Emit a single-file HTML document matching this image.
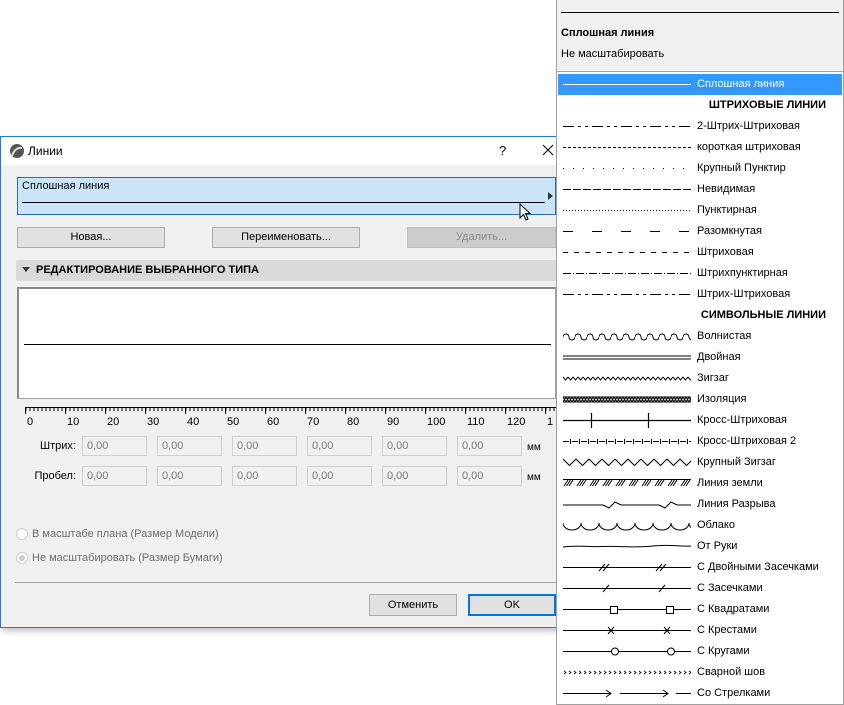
<!DOCTYPE html>
<html><head><meta charset="utf-8"><style>
*{margin:0;padding:0;box-sizing:border-box}
body{width:844px;height:705px;background:#fff;position:relative;overflow:hidden;font-family:"Liberation Sans","DejaVu Sans",sans-serif;font-size:11px;color:#000}
.a{position:absolute}
.btn{position:absolute;background:#e1e1e1;border:1px solid #adadad;text-align:center;line-height:18px;font-size:11px}
.inp{position:absolute;width:65px;height:20px;border:1px solid #cfcfcf;background:#f0f0f0;color:#7a7a7a;padding-left:4px;line-height:18px}
.row{position:absolute;left:558px;width:284px;height:21px}
.row svg{position:absolute;left:5px;top:0}
.row span{position:absolute;left:139px;top:4px;white-space:nowrap}
.hdr{position:absolute;right:16px;top:4px;font-weight:bold;white-space:nowrap}
</style></head><body>
<div class="a" style="left:0;top:136px;width:560px;height:492px;background:#f0f0f0;border:1px solid #1f7bd6;box-shadow:2px 3px 6px rgba(0,0,0,.25)"></div>
<div class="a" style="left:1px;top:137px;width:558px;height:28px;background:#fff"></div>
<svg class="a" style="left:9px;top:143px" width="16" height="16" viewBox="0 0 16 16"><circle cx="8" cy="8" r="7" fill="#555"/><path d="M3 13 Q6 4 13 5" stroke="#ddd" stroke-width="2" fill="none"/></svg>
<div class="a" style="left:28px;top:144px;font-size:12px">Линии</div>
<div class="a" style="left:499px;top:143px;font-size:13px">?</div>
<svg class="a" style="left:542px;top:144px" width="12" height="12"><path d="M1 1L11 11M11 1L1 11" stroke="#000" stroke-width="1"/></svg>
<div class="a" style="left:17px;top:177px;width:539px;height:38px;background:#cce4f7;border:1px solid #2a6db4"></div>
<div class="a" style="left:22px;top:180px">Сплошная линия</div>
<div class="a" style="left:22px;top:202px;width:523px;height:1px;background:#000"></div>
<svg class="a" style="left:548px;top:192px" width="5" height="8"><path d="M0 0L5 4L0 8Z" fill="#333"/></svg>
<svg class="a" style="left:519px;top:203px" width="14" height="20"><path d="M1 1L1 15L4.5 11.5L7 17L9 16L6.5 10.5L11 10.5Z" fill="#fff" stroke="#000" stroke-width="1"/></svg>
<div class="btn" style="left:17px;top:227px;width:148px;height:21px">Новая...</div>
<div class="btn" style="left:212px;top:227px;width:148px;height:21px">Переименовать...</div>
<div class="btn" style="left:407px;top:227px;width:149px;height:21px;background:#cccccc;border-color:#bfbfbf;color:#8a8a8a">Удалить...</div>
<div class="a" style="left:16px;top:260px;width:540px;height:21px;background:#d9d9d9;border-radius:2px"></div>
<svg class="a" style="left:22px;top:267px" width="8" height="6"><path d="M0 0L8 0L4 5Z" fill="#333"/></svg>
<div class="a" style="left:36px;top:264px;font-weight:bold">РЕДАКТИРОВАНИЕ ВЫБРАННОГО ТИПА</div>
<div class="a" style="left:17px;top:287px;width:539px;height:112px;background:#fff;border:1px solid #a0a0a0;border-top:2px solid #8a8a8a;border-left:2px solid #8a8a8a"></div>
<div class="a" style="left:24px;top:344px;width:527px;height:1px;background:#000"></div>
<svg class="a" style="left:0;top:400px" width="556" height="30">
<path d="M25 7.5H556" stroke="#000"/>
<path d="M25.5 7V14M65.5 7V14M105.5 7V14M145.5 7V14M185.5 7V14M225.5 7V14M265.5 7V14M305.5 7V14M345.5 7V14M385.5 7V14M425.5 7V14M465.5 7V14M505.5 7V14M545.5 7V14" stroke="#000"/>
<line x1="25.5" y1="9.5" x2="556" y2="9.5" stroke="#000" stroke-width="3" stroke-dasharray="1 3"/>
<g font-size="11" font-family="Liberation Sans">
<text x="27" y="25">0</text><text x="67" y="25">10</text><text x="107" y="25">20</text><text x="147" y="25">30</text><text x="187" y="25">40</text><text x="227" y="25">50</text><text x="267" y="25">60</text><text x="307" y="25">70</text><text x="347" y="25">80</text><text x="387" y="25">90</text><text x="427" y="25">100</text><text x="467" y="25">110</text><text x="507" y="25">120</text><text x="547" y="25">1</text></g>
</svg>
<div class="a" style="left:20px;top:440px;width:56px;text-align:right">Штрих:</div>
<div class="a" style="left:20px;top:470px;width:56px;text-align:right">Пробел:</div>
<div class="inp" style="left:82px;top:436px">0,00</div><div class="inp" style="left:157px;top:436px">0,00</div><div class="inp" style="left:232px;top:436px">0,00</div><div class="inp" style="left:307px;top:436px">0,00</div><div class="inp" style="left:382px;top:436px">0,00</div><div class="inp" style="left:457px;top:436px">0,00</div>
<div class="inp" style="left:82px;top:466px">0,00</div><div class="inp" style="left:157px;top:466px">0,00</div><div class="inp" style="left:232px;top:466px">0,00</div><div class="inp" style="left:307px;top:466px">0,00</div><div class="inp" style="left:382px;top:466px">0,00</div><div class="inp" style="left:457px;top:466px">0,00</div>
<div class="a" style="left:527px;top:442px;font-size:10px">мм</div>
<div class="a" style="left:527px;top:472px;font-size:10px">мм</div>
<div class="a" style="left:16px;top:528px;width:12px;height:12px;border-radius:50%;background:#fff;border:1px solid #ccc"></div>
<div class="a" style="left:32px;top:528px;color:#6d6d6d">В масштабе плана (Размер Модели)</div>
<div class="a" style="left:16px;top:552px;width:12px;height:12px;border-radius:50%;background:#fff;border:1px solid #ccc"><div style="margin:2px;width:6px;height:6px;border-radius:50%;background:#ccc"></div></div>
<div class="a" style="left:32px;top:552px;color:#6d6d6d">Не масштабировать (Размер Бумаги)</div>
<div class="a" style="left:15px;top:582px;width:541px;height:1px;background:#a0a0a0"></div>
<div class="btn" style="left:369px;top:594px;width:88px;height:22px;line-height:20px">Отменить</div>
<div class="btn" style="left:468px;top:594px;width:88px;height:22px;line-height:18px;border:2px solid #0078d7">OK</div>

<div class="a" style="left:556px;top:0;width:288px;height:705px;background:#fff;border:1px solid #a0a0a0"></div>
<div class="a" style="left:557px;top:0;width:286px;height:72px;background:#f0f0f0;border-bottom:1px solid #a0a0a0"></div>
<div class="a" style="left:561px;top:12px;width:278px;height:1px;background:#000"></div>
<div class="a" style="left:561px;top:27px;font-weight:bold">Сплошная линия</div>
<div class="a" style="left:561px;top:48px">Не масштабировать</div>
<svg width="0" height="0" style="position:absolute"><defs>
<pattern id="wave" width="12" height="21" patternUnits="userSpaceOnUse"><path d="M0 11 A3 3 0 0 1 6 11 A3 3 0 0 0 12 11" stroke="#000" fill="none"/></pattern>
<pattern id="zz" width="5" height="21" patternUnits="userSpaceOnUse"><path d="M0 9L2.5 12L5 9" stroke="#000" fill="none"/></pattern>
<pattern id="zzb" width="13" height="21" patternUnits="userSpaceOnUse"><path d="M0 7L6.5 13.5L13 7" stroke="#000" fill="none"/></pattern>
<pattern id="iso" width="3" height="21" patternUnits="userSpaceOnUse"><path d="M0 8L3 13M3 8L0 13" stroke="#000" fill="none"/><path d="M0 8H3M0 13H3" stroke="#000"/></pattern>
<pattern id="cl" width="18" height="21" patternUnits="userSpaceOnUse"><path d="M0 8 A9 7 0 0 0 18 8" stroke="#000" fill="none"/></pattern>
<pattern id="gr" width="13" height="21" patternUnits="userSpaceOnUse"><path d="M1 13L5 7M3.5 13L7.5 7M6 13L10 7" stroke="#000" fill="none"/></pattern>
<pattern id="wl" width="5" height="21" patternUnits="userSpaceOnUse"><path d="M1 9L3 10.5L1 12" stroke="#000" fill="none" stroke-width=".8"/></pattern>
<pattern id="c2" width="9" height="21" patternUnits="userSpaceOnUse"><path d="M0 10.5H6M7.5 8V13" stroke="#000" fill="none"/></pattern>
</defs></svg>
<div class="a" style="left:558px;top:74px;width:284px;height:21px;background:#3399ff"></div>
<div class="row" style="top:74px"><svg width="128" height="21"><path d="M0 10.5H128" stroke="#fff"/></svg><span style="color:#fff">Сплошная линия</span></div>
<div class="row" style="top:95px"><div class="hdr">ШТРИХОВЫЕ ЛИНИИ</div></div>
<div class="row" style="top:116px"><svg width="128" height="21"><path d="M0 10.5H128" stroke="#000" stroke-dasharray="11 4 3 4 3 4"/></svg><span>2-Штрих-Штриховая</span></div>
<div class="row" style="top:137px"><svg width="128" height="21"><path d="M0 10.5H128" stroke="#000" stroke-dasharray="3 2"/></svg><span>короткая штриховая</span></div>
<div class="row" style="top:158px"><svg width="128" height="21"><path d="M0 10.5H128" stroke="#000" stroke-dasharray="1 9"/></svg><span>Крупный Пунктир</span></div>
<div class="row" style="top:179px"><svg width="128" height="21"><path d="M0 10.5H128" stroke="#000" stroke-dasharray="8 2"/></svg><span>Невидимая</span></div>
<div class="row" style="top:200px"><svg width="128" height="21"><path d="M0 10.5H128" stroke="#000" stroke-dasharray="1 2"/></svg><span>Пунктирная</span></div>
<div class="row" style="top:221px"><svg width="128" height="21"><path d="M0 10.5H128" stroke="#000" stroke-dasharray="10 19"/></svg><span>Разомкнутая</span></div>
<div class="row" style="top:242px"><svg width="128" height="21"><path d="M0 10.5H128" stroke="#000" stroke-dasharray="5 6"/></svg><span>Штриховая</span></div>
<div class="row" style="top:263px"><svg width="128" height="21"><path d="M0 10.5H128" stroke="#000" stroke-dasharray="8 2 1 2"/></svg><span>Штрихпунктирная</span></div>
<div class="row" style="top:284px"><svg width="128" height="21"><path d="M0 10.5H128" stroke="#000" stroke-dasharray="11 4 3 4 3 4"/></svg><span>Штрих-Штриховая</span></div>
<div class="row" style="top:305px"><div class="hdr">СИМВОЛЬНЫЕ ЛИНИИ</div></div>
<div class="row" style="top:326px"><svg width="128" height="21"><rect width="128" height="21" fill="url(#wave)"/></svg><span>Волнистая</span></div>
<div class="row" style="top:347px"><svg width="128" height="21"><path d="M0 9H128M0 12H128" stroke="#000"/></svg><span>Двойная</span></div>
<div class="row" style="top:368px"><svg width="128" height="21"><rect width="128" height="21" fill="url(#zz)"/></svg><span>Зигзаг</span></div>
<div class="row" style="top:389px"><svg width="128" height="21"><rect width="128" height="21" fill="url(#iso)"/></svg><span>Изоляция</span></div>
<div class="row" style="top:410px"><svg width="128" height="21"><path d="M0 10.5H128M28.5 3V18M85.5 3V18" stroke="#000" stroke-width="1.2"/></svg><span>Кросс-Штриховая</span></div>
<div class="row" style="top:431px"><svg width="128" height="21"><rect width="128" height="21" fill="url(#c2)"/></svg><span>Кросс-Штриховая 2</span></div>
<div class="row" style="top:452px"><svg width="128" height="21"><rect width="128" height="21" fill="url(#zzb)"/></svg><span>Крупный Зигзаг</span></div>
<div class="row" style="top:473px"><svg width="128" height="21"><path d="M0 6.5H128" stroke="#000"/><rect y="6" width="128" height="8" fill="url(#gr)"/></svg><span>Линия земли</span></div>
<div class="row" style="top:494px"><svg width="128" height="21"><path d="M0 11H40L46 14L52 8L58 11H96L102 14L108 8L114 11H128" stroke="#000" fill="none"/></svg><span>Линия Разрыва</span></div>
<div class="row" style="top:515px"><svg width="128" height="21"><rect width="128" height="21" fill="url(#cl)"/></svg><span>Облако</span></div>
<div class="row" style="top:536px"><svg width="128" height="21"><path d="M0 11C15 9 25 11 40 10.5S70 12 90 10S115 11 128 10" stroke="#000" fill="none"/></svg><span>От Руки</span></div>
<div class="row" style="top:557px"><svg width="128" height="21"><path d="M0 10.5H128M36 14L42 7M40 14L46 7M93 14L99 7M97 14L103 7" stroke="#000" fill="none"/></svg><span>С Двойными Засечками</span></div>
<div class="row" style="top:578px"><svg width="128" height="21"><path d="M0 10.5H128M40 14L46 7M96 14L102 7" stroke="#000" fill="none"/></svg><span>С Засечками</span></div>
<div class="row" style="top:599px"><svg width="128" height="21"><path d="M0 10.5H128" stroke="#000"/><rect x="47.5" y="7.5" width="7" height="7" fill="#fff" stroke="#000"/><rect x="103.5" y="7.5" width="7" height="7" fill="#fff" stroke="#000"/></svg><span>С Квадратами</span></div>
<div class="row" style="top:620px"><svg width="128" height="21"><path d="M0 10.5H128M45 7L51 14M45 14L51 7M101 7L107 14M101 14L107 7" stroke="#000" fill="none"/></svg><span>С Крестами</span></div>
<div class="row" style="top:641px"><svg width="128" height="21"><path d="M0 10.5H128" stroke="#000"/><circle cx="52" cy="10.5" r="3.5" fill="#fff" stroke="#000"/><circle cx="108" cy="10.5" r="3.5" fill="#fff" stroke="#000"/></svg><span>С Кругами</span></div>
<div class="row" style="top:662px"><svg width="128" height="21"><rect width="128" height="21" fill="url(#wl)"/></svg><span>Сварной шов</span></div>
<div class="row" style="top:683px"><svg width="128" height="21"><path d="M0 10.5H48M43 7L48 10.5L43 14M57 10.5H105M100 7L105 10.5L100 14M113 10.5H128" stroke="#000" fill="none"/></svg><span>Со Стрелками</span></div>
</body></html>
